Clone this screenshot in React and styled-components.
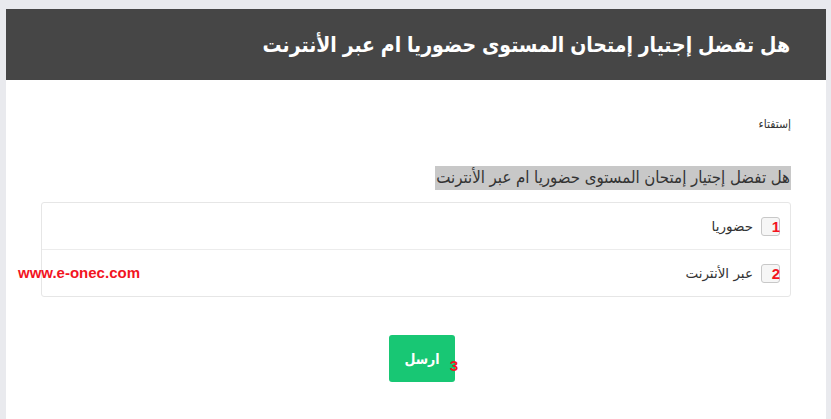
import React from "react";
import styled, { createGlobalStyle } from "styled-components";

const GlobalStyle = createGlobalStyle`
  html, body {
    margin: 0;
    padding: 0;
    background: #e9eaee;
    font-family: "Liberation Sans", "DejaVu Sans Condensed", "DejaVu Sans", Arial, sans-serif;
  }
`;

const Page = styled.div`
  padding: 9px 5px 0 6px;
  position: relative;
`;

const Card = styled.div`
  background: #fff;
  direction: rtl;
  min-height: 420px;
`;

const Header = styled.div`
  height: 71px;
  background: #464646;
  display: flex;
  align-items: center;
  padding: 0 36px;
`;

const Title = styled.h1`
  margin: 0;
  color: #fff;
  font-size: 21px;
  font-weight: 700;
  font-stretch: condensed;
`;

const Body = styled.div`
  padding: 36px 35px 0;
`;

const Kind = styled.p`
  margin: 0;
  font-size: 12px;
  color: #333;
  line-height: 16px;
`;

const Question = styled.div`
  margin-top: 34px;
`;

const Highlight = styled.span`
  background: #c8c8c8;
  color: #333;
  font-size: 16.7px;
  line-height: 24px;
  display: inline-block;
  padding: 0 1px;
  font-stretch: condensed;
`;

const Options = styled.ul`
  list-style: none;
  margin: 12px 0 0;
  padding: 0;
  border: 1px solid #e6e6e6;
  border-radius: 3px;
`;

const Option = styled.li`
  height: 46px;
  display: flex;
  align-items: center;
  gap: 8px;
  padding-right: 10px;
  position: relative;
  & + & {
    border-top: 1px solid #ececec;
  }
`;

const Check = styled.span`
  width: 17px;
  height: 17px;
  border: 1px solid #c8c8c8;
  border-radius: 3px;
  background: #f6f6f6;
  box-sizing: content-box;
`;

const OptionText = styled.span`
  font-family: "DejaVu Sans", sans-serif;
  font-size: 13.5px;
  color: #333;
`;

const Marker = styled.span`
  position: absolute;
  color: #f2141f;
  font-weight: 700;
  font-size: 15px;
  font-family: "Liberation Sans", Arial, sans-serif;
  right: ${(p) => p.$right}px;
  top: ${(p) => p.$top}px;
`;

const Actions = styled.div`
  display: flex;
  justify-content: center;
  direction: ltr;
  padding: 38px 0 0 12px;
`;

const SendButton = styled.button`
  position: relative;
  width: 66px;
  height: 47px;
  border: none;
  border-radius: 3px;
  background: #18c774;
  color: #fff;
  font-weight: 700;
  font-size: 14px;
  font-family: "Liberation Sans", "DejaVu Sans Condensed", "DejaVu Sans", Arial, sans-serif;
`;

const Watermark = styled.div`
  position: absolute;
  left: 18px;
  top: 264px;
  color: #f2141f;
  font-weight: 700;
  font-size: 15px;
  font-family: "Liberation Sans", Arial, sans-serif;
`;

const options = ["حضوريا", "عبر الأنترنت"];

export default function App() {
  return (
    <>
      <GlobalStyle />
      <Page>
        <Card>
          <Header>
            <Title>هل تفضل إجتيار إمتحان المستوى حضوريا ام عبر الأنترنت</Title>
          </Header>
          <Body>
            <Kind>إستفتاء</Kind>
            <Question>
              <Highlight>هل تفضل إجتيار إمتحان المستوى حضوريا ام عبر الأنترنت</Highlight>
            </Question>
            <Options>
              {options.map((o, i) => (
                <Option key={o}>
                  <Check />
                  <OptionText>{o}</OptionText>
                  <Marker $right={10} $top={15}>{i + 1}</Marker>
                </Option>
              ))}
            </Options>
            <Actions>
              <SendButton>
                ارسل
                <Marker $right={-3} $top={22}>3</Marker>
              </SendButton>
            </Actions>
          </Body>
        </Card>
        <Watermark>www.e-onec.com</Watermark>
      </Page>
    </>
  );
}
